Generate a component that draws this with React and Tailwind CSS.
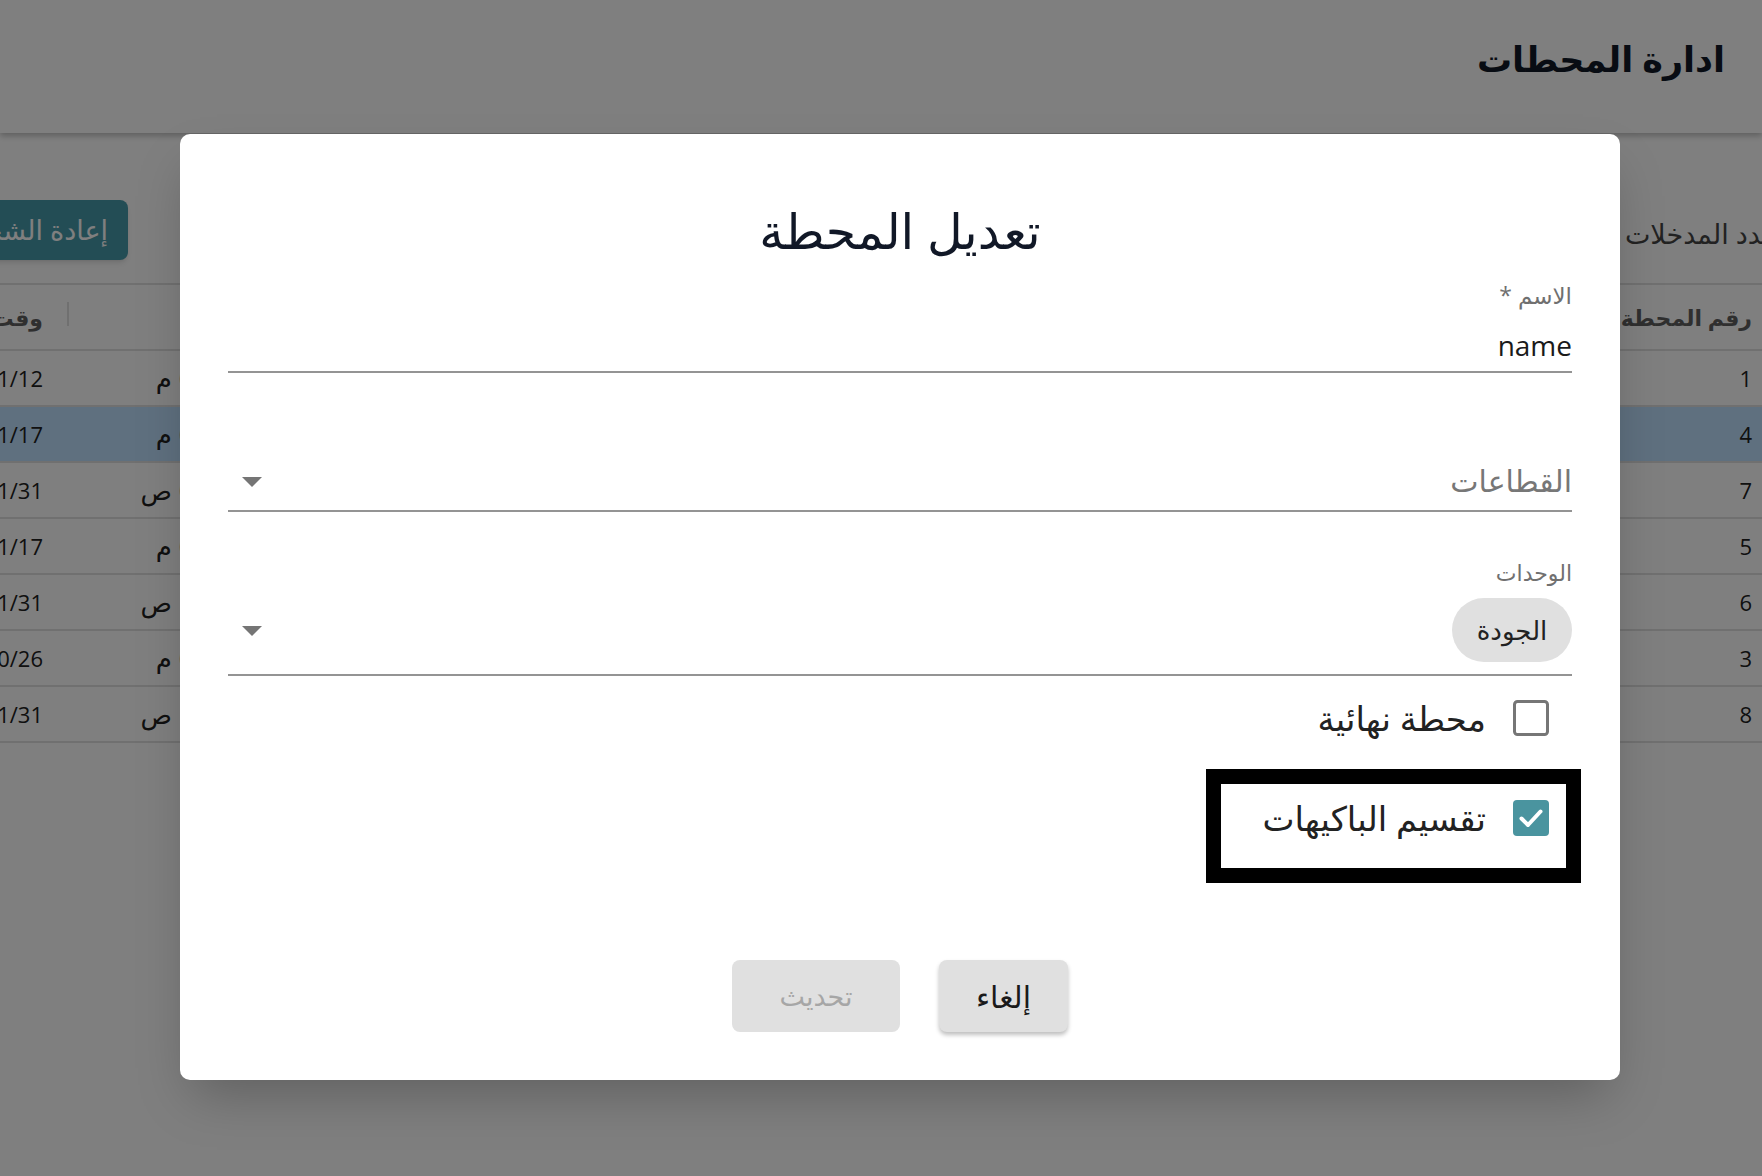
import React from 'react';

const rows = [
  { id: 1, time: '03:45 م', date: '2024/11/12' },
  { id: 4, time: '02:10 م', date: '2024/11/17', selected: true },
  { id: 7, time: '09:30 ص', date: '2024/01/31' },
  { id: 5, time: '04:20 م', date: '2024/11/17' },
  { id: 6, time: '10:05 ص', date: '2024/01/31' },
  { id: 3, time: '01:15 م', date: '2024/10/26' },
  { id: 8, time: '11:40 ص', date: '2024/01/31' },
];

function ArrowDown() {
  return (
    <svg width="48" height="48" viewBox="0 0 24 24" className="shrink-0">
      <path d="M7 10l5 5 5-5z" fill="#757575" />
    </svg>
  );
}

function CheckBox({ checked }) {
  if (checked) {
    return (
      <svg width="36" height="36" viewBox="0 0 36 36" className="shrink-0">
        <rect x="0" y="0" width="36" height="36" rx="4" fill="#4a949f" />
        <path d="M8.5 18.5l6.5 6.5 12.5-13.5" fill="none" stroke="#fff" strokeWidth="4" strokeLinecap="round" strokeLinejoin="round" />
      </svg>
    );
  }
  return (
    <svg width="36" height="36" viewBox="0 0 36 36" className="shrink-0">
      <rect x="1.5" y="1.5" width="33" height="33" rx="3" fill="none" stroke="#767676" strokeWidth="3" />
    </svg>
  );
}

export default function App() {
  return (
    <div dir="rtl" className="relative w-[1762px] h-[1176px] overflow-hidden bg-white font-['Open_Sans','DejaVu_Sans',sans-serif] text-[#212121]">
      {/* page header */}
      <header className="h-[133px] bg-white shadow-[0_3px_6px_rgba(0,0,0,0.25)] flex items-center pr-[37px] pb-[16px] relative z-10">
        <h1 className="text-[35px] font-bold text-[#111827] leading-none">ادارة المحطات</h1>
      </header>

      {/* toolbar */}
      <div className="flex items-center justify-between mt-[67px] mr-[-16px] ml-[-70px] h-[60px]">
        <span className="text-[27px] text-[#444] leading-none pt-[6px]">عدد المدخلات</span>
        <button className="h-[60px] w-[198px] rounded-[8px] bg-[#469aaa] text-white text-[27px] pr-[20px] text-right shadow-md whitespace-nowrap overflow-hidden">
          إعادة الشحن
        </button>
      </div>

      {/* table */}
      <div className="mt-[23px] mr-[-16px] ml-[-100px] border-t-2 border-[#e0e0e0]">
        <div className="flex h-[66px] items-center border-b-2 border-[#e0e0e0] font-bold text-[22px] text-[#5f5f5f]">
          <div className="w-[200px] pr-[26px]">رقم المحطة</div>
          <div className="flex-1" />
          <div className="w-[260px] pr-[26px] h-full flex items-center">الوقت</div>
          <div className="w-[169px] pr-[26px] h-full flex items-center relative">
            <span className="absolute right-0 top-[17px] h-[24px] w-[2px] bg-[#e0e0e0]" />
            وقت الإنشاء
          </div>
        </div>
        {rows.map((r) => (
          <div
            key={r.id}
            className={`flex h-[56px] items-center border-b-2 border-[#e0e0e0] text-[22px] ${r.selected ? 'bg-[#bee0ff]' : 'bg-white'}`}
          >
            <div className="w-[200px] pr-[26px]">{r.id}</div>
            <div className="flex-1" />
            <div className="w-[260px] pr-[84px] whitespace-nowrap text-[26px]">{r.time}</div>
            <div className="w-[169px] pr-[26px] whitespace-nowrap text-right" dir="ltr">{r.date}</div>
          </div>
        ))}
      </div>

      {/* backdrop */}
      <div className="absolute inset-0 bg-black/50 z-20" />

      {/* dialog */}
      <div className="absolute z-30 left-[180px] top-[134px] w-[1440px] bg-white rounded-[10px] shadow-2xl px-12 pt-[72px] pb-[48px] flex flex-col">
        <h2 className="text-center text-[49px] leading-[48px] text-[#111827]">تعديل المحطة</h2>

        {/* name */}
        <div className="mt-[29px]">
          <label className="block text-[23px] leading-[24px] text-[#707070]">الاسم *</label>
          <div className="mt-[20px] pb-[8px] border-b-2 border-[#949494]">
            <div className="text-[28px] leading-[36px] text-[#1a1a1a]">name</div>
          </div>
        </div>

        {/* sectors */}
        <div className="mt-[90px] pb-[11px] border-b-2 border-[#949494] flex items-center justify-between h-[49px]">
          <span className="text-[30px] leading-[36px] text-[#777]">القطاعات</span>
          <ArrowDown />
        </div>

        {/* units */}
        <div className="mt-[48px]">
          <label className="block text-[22px] leading-[24px] text-[#707070]">الوحدات</label>
          <div className="mt-[14px] pb-[12px] border-b-2 border-[#949494] flex items-center justify-between">
            <span className="h-[64px] w-[120px] rounded-full bg-[#e0e0e0] flex items-center justify-center text-[26px] text-[#222]">الجودة</span>
            <ArrowDown />
          </div>
        </div>

        {/* final station */}
        <div className="mt-[18px] h-[48px] w-[345px] mr-[6px] pr-[17px] flex items-center gap-[27px]">
          <CheckBox />
          <span className="text-[34px] leading-[40px] text-[#222]">محطة نهائية</span>
        </div>

        {/* split packages (focused) */}
        <div className="mt-[42px] h-[84px] w-[345px] mr-[6px] pr-[17px] pt-[16px] flex items-start gap-[27px] outline-[15px] outline-solid outline-black">
          <CheckBox checked />
          <span className="text-[34px] leading-[36px] text-[#222] whitespace-nowrap">تقسيم الباكيهات</span>
        </div>

        {/* actions */}
        <div className="mt-[92px] flex justify-center gap-[39px]">
          <button className="h-[72px] w-[129px] rounded-[8px] bg-[#e0e0e0] text-[30px] text-[#1a1a1a] shadow-[0_3px_4px_rgba(0,0,0,0.25)]">إلغاء</button>
          <button disabled className="h-[72px] w-[168px] rounded-[8px] bg-[#e0e0e0] text-[27px] text-[#a6a6a6]">تحديث</button>
        </div>
      </div>
    </div>
  );
}
